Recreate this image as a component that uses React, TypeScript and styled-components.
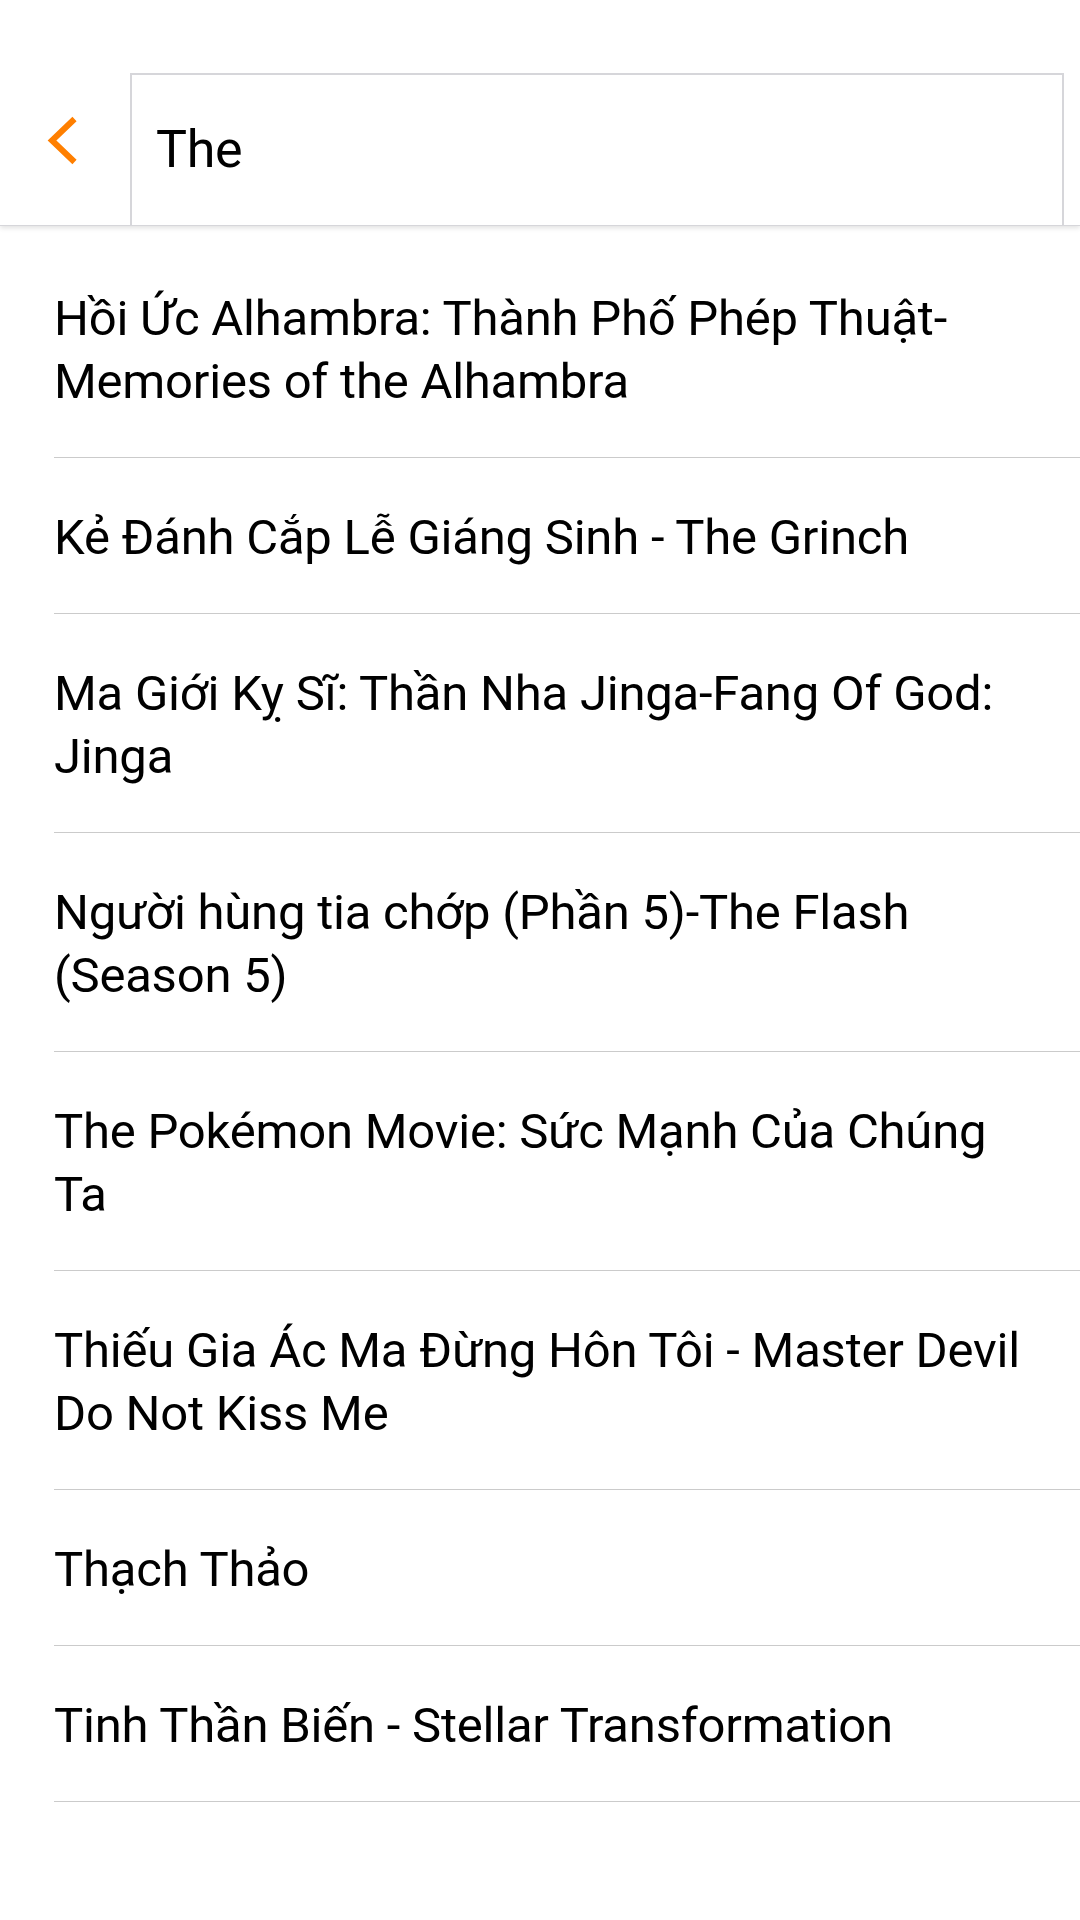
import React from "react";
import styled, { createGlobalStyle } from "styled-components";

const GlobalStyle = createGlobalStyle`
  html, body {
    margin: 0;
    padding: 0;
    background: #ffffff;
  }
  body {
    font-family: Roboto, "Noto Sans", "Liberation Sans", sans-serif;
    color: #000;
  }
  * { box-sizing: border-box; }
`;

const Page = styled.div`
  width: 1080px;
  min-height: 1920px;
  background: #ffffff;
  display: flex;
  flex-direction: column;
`;

const Header = styled.header`
  position: relative;
  z-index: 2;
  height: 225px;
  padding-top: 73px;
  display: flex;
  background: #ffffff;
  box-shadow: 0 1px 0 #d6d6da, 0 3px 5px rgba(0, 0, 0, 0.12);
`;

const BackButton = styled.button`
  width: 130px;
  height: 152px;
  flex: none;
  border: none;
  background: transparent;
  padding: 42px 0 0 46px;
  margin: 0;
  display: flex;
  align-items: flex-start;
  justify-content: flex-start;
  cursor: pointer;
`;

const SearchField = styled.input`
  flex: 1;
  height: 152px;
  margin: 0 16px 0 0;
  border: 2px solid #d6d6da;
  border-bottom: none;
  padding: 0 20px 2px 24px;
  font-family: Roboto, "Noto Sans", sans-serif;
  font-size: 52px;
  letter-spacing: -0.3px;
  color: #000;
  background: #ffffff;
  outline: none;
`;

const List = styled.ul`
  list-style: none;
  margin: 0;
  padding: 14px 0 0 0;
`;

const Item = styled.li`
  margin-left: 54px;
  padding: 48px 44px 44px 0;
  border-bottom: 1px solid #cbcbcb;
  font-family: Roboto, "Noto Sans", sans-serif;
  font-size: 49px;
  letter-spacing: -0.22px;
  line-height: 63px;
  color: #000;
`;

const titles = [
  "Hồi Ức Alhambra: Thành Phố Phép Thuật-Memories of the Alhambra",
  "Kẻ Đánh Cắp Lễ Giáng Sinh - The Grinch",
  "Ma Giới Kỵ Sĩ: Thần Nha Jinga-Fang Of God: Jinga",
  "Người hùng tia chớp (Phần 5)-The Flash (Season 5)",
  "The Pokémon Movie: Sức Mạnh Của Chúng Ta",
  "Thiếu Gia Ác Ma Đừng Hôn Tôi - Master Devil Do Not Kiss Me",
  "Thạch Thảo",
  "Tinh Thần Biến - Stellar Transformation",
];

const ChevronLeft = () => (
  <svg width="36" height="51" viewBox="0 0 36 51" fill="none">
    <polyline
      points="28.5,4 6,25.5 28.5,47"
      stroke="#FF7F00"
      strokeWidth="6"
      strokeLinecap="butt"
      strokeLinejoin="miter"
    />
  </svg>
);

export default function App() {
  return (
    <>
      <GlobalStyle />
      <Page>
        <Header>
          <BackButton aria-label="Back">
            <ChevronLeft />
          </BackButton>
          <SearchField defaultValue="The" readOnly />
        </Header>
        <List>
          {titles.map((t) => (
            <Item key={t}>{t}</Item>
          ))}
        </List>
      </Page>
    </>
  );
}
